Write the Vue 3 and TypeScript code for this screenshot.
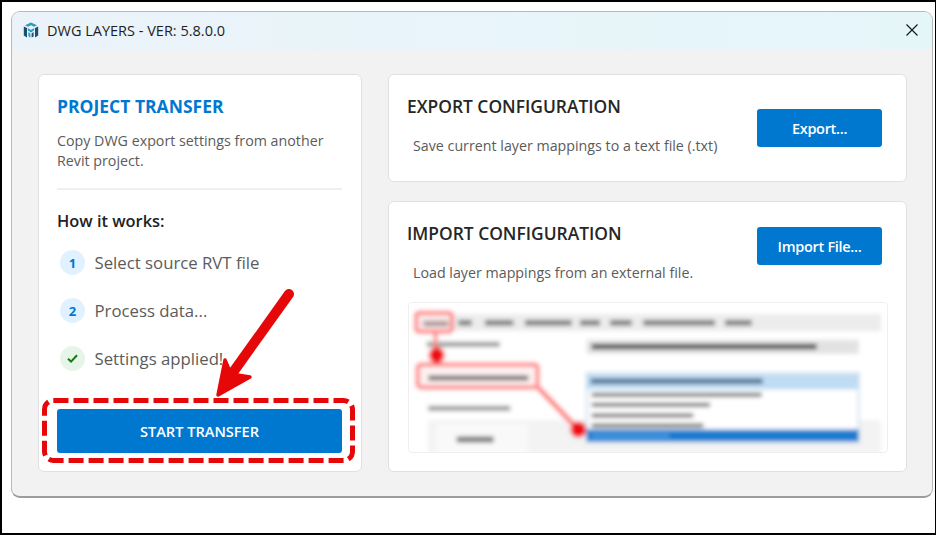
<script setup lang="ts">
const steps = [
  { mark: '1', text: 'Select source RVT file', done: false },
  { mark: '2', text: 'Process data...', done: false },
  { mark: '', text: 'Settings applied!', done: true },
]
const topLabels: [number, number][] = [[70, 150], [175, 215], [255, 340], [375, 515], [540, 600], [630, 695], [730, 945], [975, 1055]]
const listLines: [number, number, number][] = [[298, 575, 1085], [328, 575, 930], [360, 575, 880], [390, 575, 910]]
const zx = (v: number) => v / 3 - 8
const zy = (v: number) => v / 3 - 7.5
</script>

<template>
  <div class="screen">
    <div class="window">
      <header class="titlebar">
        <svg class="logo" viewBox="0 0 16 16" aria-hidden="true">
          <path d="M8 0.4 L14 3.2 L11 4.8 L8 3.2 L5 4.8 L2 3.2 Z" fill="#2a9cc0" />
          <path d="M0.8 4.4 L4 6 L4 15.4 L0.8 13.6 Z" fill="#1d4f73" />
          <path d="M15.2 4.4 L12 6 L12 15.4 L15.2 13.6 Z" fill="#1d4f73" />
          <path d="M4.8 6 L8 8 L11.2 6 L11.2 8.2 L8 10.4 L4.8 8.2 Z" fill="#2a9cc0" />
          <path d="M5.4 10 L7.4 11.4 L7.4 15.6 L5.4 14.6 Z" fill="#2a9cc0" />
          <path d="M10.6 10 L8.6 11.4 L8.6 15.6 L10.6 14.6 Z" fill="#1d4f73" />
        </svg>
        <span class="title">DWG LAYERS - VER: 5.8.0.0</span>
        <svg class="close" viewBox="0 0 12 12" aria-hidden="true">
          <path d="M0.5 0.5 L11.5 11.5 M11.5 0.5 L0.5 11.5" />
        </svg>
      </header>

      <main class="body">
        <section class="card left">
          <h2 class="project">PROJECT TRANSFER</h2>
          <p class="desc">Copy DWG export settings from another Revit project.</p>
          <hr class="divider" />
          <h3 class="how">How it works:</h3>
          <ul class="steps">
            <li v-for="s in steps" :key="s.text" class="step">
              <span class="badge" :class="{ done: s.done }">
                <svg v-if="s.done" class="check" viewBox="0 0 12 10" aria-hidden="true">
                  <path d="M1 5.2 L4.4 8.4 L11 1.4" />
                </svg>
                <template v-else>{{ s.mark }}</template>
              </span>
              <span>{{ s.text }}</span>
            </li>
          </ul>
          <button class="btn start">START TRANSFER</button>
        </section>

        <div class="right">
          <section class="card config export">
            <div class="config-text">
              <h2 class="config-title">EXPORT CONFIGURATION</h2>
              <p class="config-desc">Save current layer mappings to a text file (.txt)</p>
            </div>
            <button class="btn action">Export...</button>
          </section>

          <section class="card config import">
            <div class="import-head">
              <div class="config-text">
                <h2 class="config-title">IMPORT CONFIGURATION</h2>
                <p class="config-desc">Load layer mappings from an external file.</p>
              </div>
              <button class="btn action">Import File...</button>
            </div>
            <svg class="preview" viewBox="0 0 480 151" aria-hidden="true">
              <defs>
                <filter id="soft" x="-5%" y="-5%" width="110%" height="110%">
                  <feGaussianBlur stdDeviation="2.1" />
                </filter>
              </defs>
              <g filter="url(#soft)">
                <rect x="0" y="0" width="480" height="151" fill="#ffffff" />
                <rect x="6" y="12" width="467" height="17" fill="#ececec" />
                <rect v-for="(t, i) in topLabels" :key="i" :x="zx(t[0])" y="18" :width="(t[1] - t[0]) / 3" height="5.5" fill="#7c7c7c" />
                <rect :x="zx(80)" :y="zy(142)" width="73" height="5" fill="#999" />
                <rect :x="zx(85)" :y="zy(334)" width="82" height="5" fill="#999" />

                <rect :x="zx(560)" :y="zy(136)" width="272" height="14" fill="#e2e2e2" />
                <rect :x="zx(575)" :y="zy(148)" width="225" height="5.5" fill="#555" />

                <rect x="20" y="118" width="453" height="33" fill="#f3f3f3" />
                <rect x="28" y="122" width="92" height="29" fill="#f9f9f9" />
                <rect :x="zx(170)" :y="zy(426)" width="37" height="6" fill="#7d7d7d" />

                <rect :x="zx(560)" :y="zy(236)" width="272" height="69" fill="#ffffff" stroke="#c9def0" stroke-width="2" />
                <rect :x="zx(560)" :y="zy(240)" width="272" height="15" fill="#c0dcf2" />
                <rect :x="zx(572)" :y="zy(252)" width="172" height="5.5" fill="#4f7496" />
                <rect v-for="(l, i) in listLines" :key="i" :x="zx(l[1])" :y="zy(l[0] - 3)" :width="(l[2] - l[1]) / 3" height="4" fill="#707070" />
                <rect :x="zx(560)" :y="zy(405)" width="272" height="12" fill="#167bd0" />
                <rect :x="zx(575)" :y="zy(418)" width="78" height="4" fill="#4a9be0" />

                <rect :x="zx(48)" :y="zy(55)" width="36" height="19" rx="3" fill="#fbe9e9" stroke="#ff8080" stroke-width="4" />
                <rect :x="zx(70)" :y="zy(80)" width="25" height="5" fill="#a58f8f" />
                <path :d="`M${zx(106)} ${zy(115)} L${zx(110)} ${zy(200)}`" stroke="#ff8a8a" stroke-width="4" fill="none" />
                <rect :x="zx(53)" :y="zy(210)" width="120" height="23" rx="3" fill="#fdf1f1" stroke="#ff8080" stroke-width="4" />
                <rect :x="zx(85)" :y="zy(243)" width="100" height="5" fill="#7c7070" />
                <path :d="`M${zx(415)} ${zy(280)} L${zx(535)} ${zy(405)}`" stroke="#ff7c7c" stroke-width="5" fill="none" />
                <circle :cx="zx(110)" :cy="zy(182)" r="8" fill="#f00a18" />
                <circle :cx="zx(535)" :cy="zy(405)" r="8" fill="#f00a18" />
              </g>
              <rect x="0.5" y="0.5" width="479" height="150" rx="3" fill="none" stroke="#efefef" />
            </svg>
          </section>
        </div>
      </main>
    </div>

    <svg class="annotation" viewBox="0 0 936 535" aria-hidden="true">
      <rect class="dash" x="44.5" y="400.5" width="308" height="60" rx="9" />
      <path class="shaft" d="M289 294 L229 378" />
      <path class="head" d="M218 395 L225 360 L231 374 L250 377 Z" />
    </svg>
  </div>
</template>

<style>
html, body { margin: 0; background: #fff; }
</style>

<style scoped>
.screen {
  position: relative;
  width: 936px;
  height: 535px;
  box-sizing: border-box;
  border: solid #000;
  border-width: 2px 1px 2px 2px;
  padding: 9px 2px 0 9px;
  background: #fff;
  font-family: "Open Sans", "Noto Sans", sans-serif;
}
.window {
  height: 487px;
  box-sizing: border-box;
  border: 1px solid #b9b9b9;
  border-bottom: 2px solid #9c9c9c;
  border-radius: 9px;
  background: #f2f2f2;
  overflow: hidden;
  display: flex;
  flex-direction: column;
}
.titlebar {
  height: 38px;
  box-sizing: border-box;
  flex: none;
  display: flex;
  align-items: center;
  padding: 0 14px 2px 11px;
  background: linear-gradient(90deg, #ebf3f9, #e5f6f9);
}
.logo { width: 16px; height: 16px; flex: none; }
.title {
  margin-left: 8px;
  font-size: 14.5px;
  color: #1e1e1e;
}
.close {
  width: 12px;
  height: 12px;
  margin-left: auto;
  fill: none;
  stroke: #1a1a1a;
  stroke-width: 1.2;
}
.body {
  flex: 1;
  min-height: 0;
  display: flex;
  gap: 26px;
  padding: 24px 25px 24px 26px;
}
.card {
  box-sizing: border-box;
  background: #fff;
  border: 1px solid #e0e0e0;
  border-radius: 6px;
}
.left {
  width: 324px;
  flex: none;
  display: flex;
  flex-direction: column;
  padding: 19px 19px 18px 18px;
}
.project {
  margin: 0;
  font-size: 17.5px;
  line-height: 24px;
  font-weight: 700;
  color: #0078d0;
}
.desc {
  margin: 13px 0 0;
  font-size: 14.25px;
  line-height: 20px;
  color: #5b5b5b;
}
.divider {
  width: 100%;
  height: 2px;
  margin: 17px 0 0;
  border: 0;
  background: #efefef;
}
.how {
  margin: 19px 0 0;
  font-size: 16.4px;
  line-height: 24px;
  font-weight: 600;
  color: #222;
}
.steps {
  list-style: none;
  margin: 17px 0 0;
  padding: 0 0 0 3px;
  display: flex;
  flex-direction: column;
  gap: 23px;
}
.step {
  display: flex;
  align-items: center;
  gap: 9.5px;
  height: 25px;
  font-size: 16.75px;
  color: #5b5b5b;
}
.badge {
  width: 25px;
  height: 25px;
  flex: none;
  border-radius: 50%;
  background: #e0f2ff;
  color: #0078d0;
  font-size: 13px;
  font-weight: 700;
  display: flex;
  align-items: center;
  justify-content: center;
}
.badge.done { background: #e6f4ea; }
.check {
  width: 11px;
  height: 9px;
  fill: none;
  stroke: #107c10;
  stroke-width: 2.2;
}
.btn {
  border: 0;
  border-radius: 3px;
  background: #0078d0;
  color: #fff;
  font-family: inherit;
  font-weight: 600;
  padding: 0;
}
.start {
  margin-top: auto;
  height: 44px;
  width: 100%;
  font-size: 14.6px;
}
.right {
  flex: 1;
  min-width: 0;
  display: flex;
  flex-direction: column;
  gap: 19px;
}
.config { padding: 0 24px 0 18px; }
.export {
  height: 108px;
  flex: none;
  display: flex;
  justify-content: space-between;
  align-items: flex-start;
  padding-top: 19px;
}
.export .action { margin-top: 15px; }
.import {
  flex: 1;
  min-height: 0;
  padding-top: 19px;
  padding-right: 18px;
  display: flex;
  flex-direction: column;
}
.import-head {
  display: flex;
  justify-content: space-between;
  align-items: flex-start;
  padding-right: 6px;
}
.import-head .action { margin-top: 6px; }
.config-title {
  margin: 0;
  font-size: 17.4px;
  line-height: 24px;
  font-weight: 600;
  color: #262626;
}
.config-desc {
  margin: 18px 0 0 6px;
  font-size: 14.25px;
  line-height: 20px;
  color: #5b5b5b;
}
.action {
  width: 125px;
  height: 38px;
  flex: none;
  font-size: 14.5px;
  letter-spacing: -0.3px;
}
.preview {
  display: block;
  width: 480px;
  height: 151px;
  margin: 19px 0 0 1px;
  border-radius: 3px;
}
.annotation {
  position: absolute;
  left: -2px;
  top: -2px;
  width: 936px;
  height: 535px;
  pointer-events: none;
}
.dash {
  fill: none;
  stroke: #e60808;
  stroke-width: 5;
  stroke-dasharray: 15 5;
}
.shaft {
  fill: none;
  stroke: #e60808;
  stroke-width: 10;
  stroke-linecap: round;
}
.head {
  fill: #e60808;
  stroke: #e60808;
  stroke-width: 3.5;
  stroke-linejoin: round;
}
</style>
